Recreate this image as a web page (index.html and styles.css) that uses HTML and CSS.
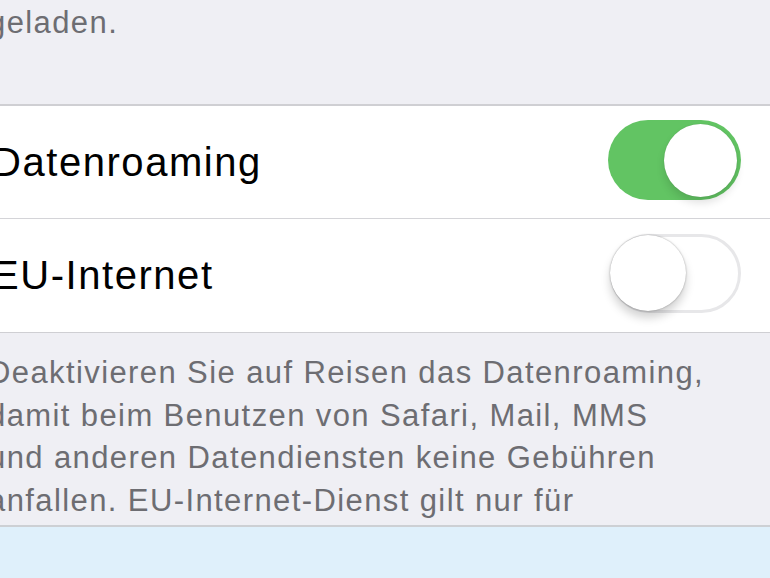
FILE: index.html
```html
<!DOCTYPE html>
<html lang="de">
<head>
<meta charset="utf-8">
<link rel="stylesheet" href="styles.css">
</head>
<body>
<div class="screen">
  <p class="note">geladen.</p>
  <div class="group">
    <div class="cell">
      <span class="label">Datenroaming</span>
      <span class="switch on"><span class="knob"></span></span>
    </div>
    <div class="cell">
      <span class="label">EU-Internet</span>
      <span class="switch off"><span class="knob"></span></span>
    </div>
  </div>
  <p class="footer">Deaktivieren Sie auf Reisen das Datenroaming,<br>damit beim Benutzen von Safari, Mail, MMS<br>und anderen Datendiensten keine Gebühren<br>anfallen. EU-Internet-Dienst gilt nur für</p>
  <div class="bar"></div>
</div>
</body>
</html>
```
FILE: styles.css
```css
html, body {
  margin: 0;
  padding: 0;
}
body {
  width: 770px;
  height: 578px;
  overflow: hidden;
  background: #efeff4;
  font-family: "Liberation Sans", Arial, sans-serif;
}
.screen {
  display: flex;
  flex-direction: column;
  height: 578px;
}
.note {
  margin: 0 0 0 -12px;
  height: 104px;
  font-size: 31px;
  letter-spacing: 1.4px;
  line-height: 42px;
  color: #6d6d72;
  padding-top: 2px;
  box-sizing: border-box;
}
.group {
  background: #fff;
  border-top: 2px solid #cfcfd3;
  border-bottom: 1px solid #cfcfd3;
}
.cell {
  height: 112px;
  display: flex;
  align-items: center;
  justify-content: space-between;
  padding-right: 29px;
  margin-left: -8px;
}
.cell + .cell {
  border-top: 1px solid #d4d4d8;
  height: 113px;
}
.label {
  font-size: 40px;
  letter-spacing: 1.55px;
  color: #000;
}
.switch {
  position: relative;
  width: 133px;
  height: 80px;
  border-radius: 40px;
  box-sizing: border-box;
}
.switch.on {
  background: #62c463;
  margin-top: -4px;
}
.switch.off {
  background: #fff;
  border: 3px solid #e7e7e9;
  width: 131px;
  height: 79px;
  margin-top: -4px;
}
.knob {
  position: absolute;
  border-radius: 50%;
  background: #fff;
}
.on .knob {
  width: 73px;
  height: 73px;
  right: 4px;
  top: 4px;
  box-shadow: 0 6px 8px rgba(0,0,0,0.12), 0 0 1px rgba(0,0,0,0.2);
}
.off .knob {
  width: 76px;
  height: 76px;
  left: -3px;
  top: -2px;
  box-shadow: 0 7px 10px rgba(0,0,0,0.18), 0 0 2px rgba(0,0,0,0.35);
}
.footer {
  margin: 0 0 0 -12px;
  height: 192px;
  box-sizing: border-box;
  padding-top: 19px;
  font-size: 31px;
  line-height: 42.5px;
  letter-spacing: 1.4px;
  color: #6d6d72;
}
.bar {
  flex: 1;
  background: #dff0fb;
  border-top: 2px solid #cdd0d4;
}
```
